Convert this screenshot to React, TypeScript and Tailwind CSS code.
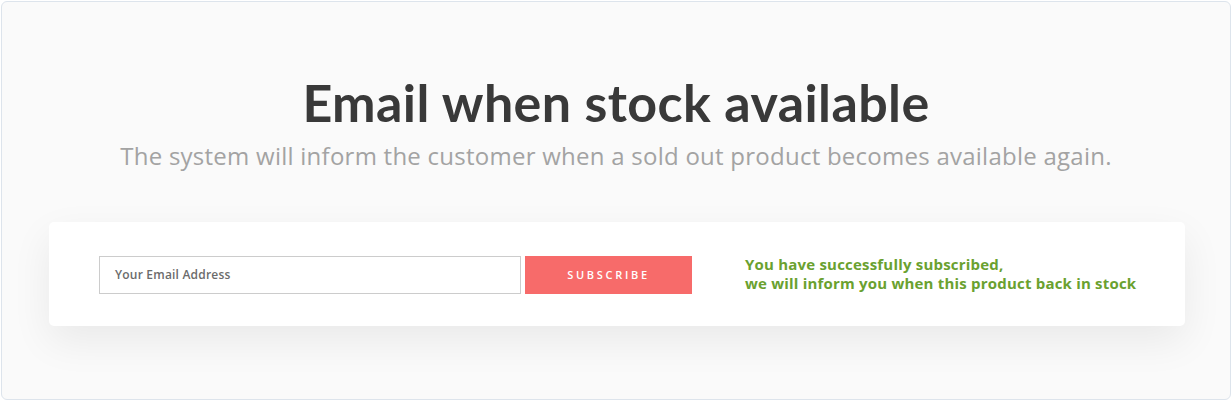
import React from "react";

export default function App() {
  return (
    <div className="w-[1232px] h-[401px] bg-white p-[1px]" style={{ fontFamily: "'Open Sans', sans-serif" }}>
      <div className="h-full w-full rounded-[6px] border border-[#dde4ec] bg-[#fafafa] flex flex-col items-center">
        <h1
          className="mt-[70px] text-[52px] leading-[60px] font-bold text-[#393939] tracking-[0.4px]"
          style={{ fontFamily: "Lato, 'Open Sans', sans-serif" }}
        >
          Email when stock available
        </h1>
        <p className="mt-[7px] text-[24px] leading-[34px] text-[#a3a3a3] tracking-[0.25px]">
          The system will inform the customer when a sold out product becomes available again.
        </p>
        <div className="mt-[49px] w-[1136px] h-[104px] ml-[2px] bg-white rounded-[5px] shadow-[0_15px_40px_rgba(0,0,0,0.07)] flex items-start pt-[34px] pl-[50px]">
          <div className="w-[422px] h-[38px] border border-[#cccccc] flex items-center px-[15px] text-[12px] text-[#6b6b6b] font-semibold tracking-[0.2px]">
            Your Email Address
          </div>
          <div className="ml-[4px] w-[167px] h-[38px] bg-[#f76b6a] flex items-center justify-center text-white text-[11px] font-semibold tracking-[2.7px]">
            SUBSCRIBE
          </div>
          <div className="ml-[53px] mt-[-1px] text-[#6aa12f] text-[15px] leading-[19px] font-bold tracking-[0.2px]">
            <div>You have successfully subscribed,</div>
            <div>we will inform you when this product back in stock</div>
          </div>
        </div>
      </div>
    </div>
  );
}
